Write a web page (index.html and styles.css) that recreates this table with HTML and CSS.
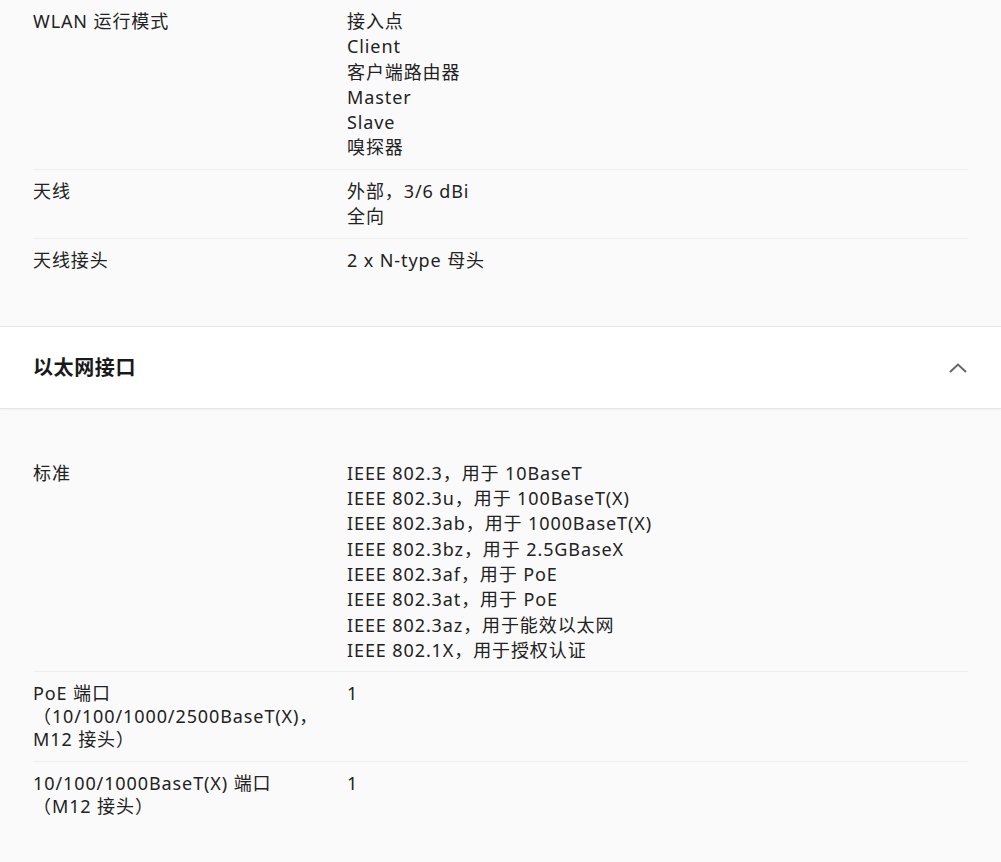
FILE: index.html
```html
<!DOCTYPE html>
<html lang="zh-CN">
<head>
    <meta charset="UTF-8">
    <meta name="viewport" content="width=device-width, initial-scale=1.0">
    <title>技术规格</title>
    <link rel="stylesheet" href="styles.css">
</head>
<body>
    <div class="spec-body spec-body-first">
        <div class="spec-row">
            <div class="spec-label">WLAN 运行模式</div>
            <div class="spec-value">
                <div>接入点</div>
                <div>Client</div>
                <div>客户端路由器</div>
                <div>Master</div>
                <div>Slave</div>
                <div>嗅探器</div>
            </div>
        </div>
        <div class="spec-row">
            <div class="spec-label">天线</div>
            <div class="spec-value">
                <div>外部，3/6 dBi</div>
                <div>全向</div>
            </div>
        </div>
        <div class="spec-row">
            <div class="spec-label">天线接头</div>
            <div class="spec-value">
                <div>2 x N-type 母头</div>
            </div>
        </div>
    </div>

    <div class="spec-header">
        <div class="spec-title">以太网接口</div>
        <svg class="chevron" width="18" height="10" viewBox="0 0 18 10">
            <path d="M1 9 L9 1.5 L17 9" fill="none" stroke="#666" stroke-width="2"/>
        </svg>
    </div>

    <div class="spec-body">
        <div class="spec-row">
            <div class="spec-label">标准</div>
            <div class="spec-value">
                <div>IEEE 802.3，用于 10BaseT</div>
                <div>IEEE 802.3u，用于 100BaseT(X)</div>
                <div>IEEE 802.3ab，用于 1000BaseT(X)</div>
                <div>IEEE 802.3bz，用于 2.5GBaseX</div>
                <div>IEEE 802.3af，用于 PoE</div>
                <div>IEEE 802.3at，用于 PoE</div>
                <div>IEEE 802.3az，用于能效以太网</div>
                <div>IEEE 802.1X，用于授权认证</div>
            </div>
        </div>
        <div class="spec-row">
            <div class="spec-label">PoE 端口<br>（10/100/1000/2500BaseT(X)，<br>M12 接头）</div>
            <div class="spec-value">
                <div>1</div>
            </div>
        </div>
        <div class="spec-row">
            <div class="spec-label">10/100/1000BaseT(X) 端口<br>（M12 接头）</div>
            <div class="spec-value">
                <div>1</div>
            </div>
        </div>
    </div>
</body>
</html>
```

FILE: styles.css
```css
body {
    font-family: 'Noto Sans', 'Noto Sans CJK SC', sans-serif;
    background-color: #FAFAFA;
    color: #222222;
    margin: 0;
    padding: 0;
    font-size: 18px;
    line-height: 22.5px;
    letter-spacing: 0.9px;
}

.spec-body {
    padding: 43px 33px 30px;
}

.spec-body-first {
    padding-top: 0;
    padding-bottom: 44px;
}

.spec-row {
    display: flex;
    padding: 10px 0;
    border-bottom: 1px solid #EEEEEE;
}

.spec-row:last-child {
    border-bottom: none;
}

.spec-label {
    width: 314px;
    flex-shrink: 0;
    white-space: nowrap;
    line-height: 23px;
}

.spec-value {
    flex: 1;
    display: flex;
    flex-direction: column;
    gap: 2.8px;
}

.spec-header {
    display: flex;
    align-items: center;
    justify-content: space-between;
    height: 81px;
    padding: 0 33px;
    background-color: white;
    border-top: 1px solid #E6E6E6;
    border-bottom: 1px solid #E6E6E6;
    box-shadow: 0 1px 2px rgba(0, 0, 0, 0.04);
}

.spec-title {
    font-size: 20px;
    font-weight: bold;
    letter-spacing: 0.6px;
    color: #1A1A1A;
    margin-top: 2px;
}

.chevron {
    display: block;
    margin-right: 1px;
    margin-top: 2px;
}
```
